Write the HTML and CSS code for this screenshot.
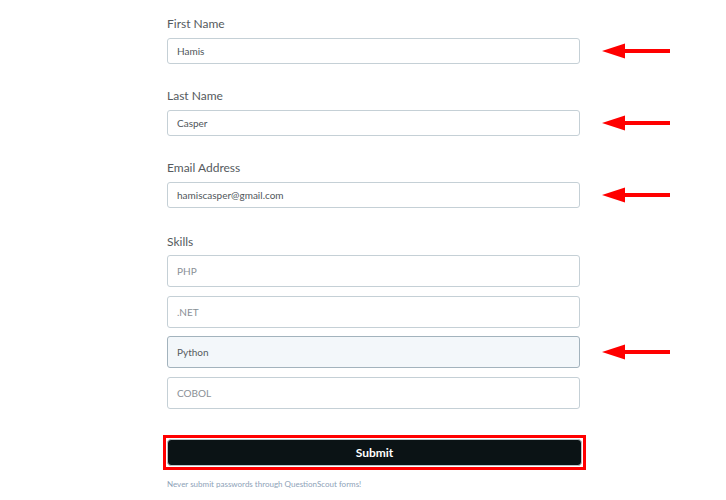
FILE: index.html
```html
<!DOCTYPE html>
<html lang="en">
<head>
    <meta charset="UTF-8">
    <meta name="viewport" content="width=device-width, initial-scale=1.0">
    <title>Application Form</title>
    <link rel="stylesheet" href="styles.css">
</head>
<body>
<div class="form">
    <div class="field">
        <label class="label" for="first_name">First Name</label>
        <div class="row">
            <input class="input" type="text" id="first_name" value="Hamis">
            <svg class="arrow" width="70" height="16" viewBox="0 0 70 16"><polygon points="0,8 23,0.5 23,15.5" fill="#ff0000"/><rect x="20" y="6" width="48" height="4" fill="#ff0000"/></svg>
        </div>
    </div>
    <div class="field">
        <label class="label" for="last_name">Last Name</label>
        <div class="row">
            <input class="input" type="text" id="last_name" value="Casper">
            <svg class="arrow" width="70" height="16" viewBox="0 0 70 16"><polygon points="0,8 23,0.5 23,15.5" fill="#ff0000"/><rect x="20" y="6" width="48" height="4" fill="#ff0000"/></svg>
        </div>
    </div>
    <div class="field">
        <label class="label" for="email">Email Address</label>
        <div class="row">
            <input class="input" type="text" id="email" value="hamiscasper@gmail.com">
            <svg class="arrow" width="70" height="16" viewBox="0 0 70 16"><polygon points="0,8 23,0.5 23,15.5" fill="#ff0000"/><rect x="20" y="6" width="48" height="4" fill="#ff0000"/></svg>
        </div>
    </div>
    <div class="field skills">
        <div class="label">Skills</div>
        <div class="options">
            <div class="row"><div class="option">PHP</div></div>
            <div class="row"><div class="option">.NET</div></div>
            <div class="row">
                <div class="option selected">Python</div>
                <svg class="arrow" width="70" height="16" viewBox="0 0 70 16"><polygon points="0,8 23,0.5 23,15.5" fill="#ff0000"/><rect x="20" y="6" width="48" height="4" fill="#ff0000"/></svg>
            </div>
            <div class="row"><div class="option">COBOL</div></div>
        </div>
    </div>
    <!-- red box marks the submit button -->
    <div class="submit-box">
        <button class="submit">Submit</button>
    </div>
    <p class="note">Never submit passwords through QuestionScout forms!</p>
</div>
</body>
</html>
```

FILE: styles.css
```css
body {
    font-family: Lato, "Open Sans", sans-serif;
    background-color: #ffffff;
    margin: 0;
    padding: 0;
}

.form {
    width: 413px;
    margin-left: 167px;
    padding-top: 16px;
}

.field {
    margin-bottom: 24px;
}

.label {
    display: block;
    font-size: 12px;
    line-height: 16px;
    color: #555a5e;
    margin-bottom: 6px;
}

.row {
    display: flex;
    align-items: center;
    width: 413px;
    position: relative;
}

.arrow {
    position: absolute;
    left: 435px;
    top: 50%;
    margin-top: -8px;
}

.input {
    box-sizing: border-box;
    width: 413px;
    height: 26px;
    border: 1px solid #c5d0d6;
    border-radius: 3px;
    padding: 0 9px;
    font-family: inherit;
    font-size: 10px;
    color: #50565a;
    background-color: #ffffff;
}

.skills {
    padding-top: 2px;
    margin-bottom: 26px;
}

.skills .label {
    margin-bottom: 5px;
}

.options {
    display: flex;
    flex-direction: column;
    gap: 8.5px;
}

.option {
    box-sizing: border-box;
    width: 413px;
    height: 32px;
    line-height: 30px;
    border: 1px solid #c5d0d6;
    border-radius: 3px;
    padding: 0 9px;
    font-size: 10px;
    color: #8a9096;
}

.option.selected {
    background-color: #f3f7fa;
    border-color: #a3b3bd;
    color: #555b5f;
}

.submit-box {
    width: 415px;
    margin-left: -4px;
    padding: 1px;
    border: 3px solid #ff0000;
}

.submit {
    display: block;
    box-sizing: border-box;
    width: 415px;
    height: 27px;
    background-color: #0b1315;
    color: #ffffff;
    border: 1px solid #b9c2c6;
    border-radius: 4px;
    font-family: inherit;
    font-weight: bold;
    font-size: 12px;
    cursor: pointer;
}

.note {
    margin: 9px 0 0 0;
    font-size: 8px;
    color: #8ea2b8;
}
```
